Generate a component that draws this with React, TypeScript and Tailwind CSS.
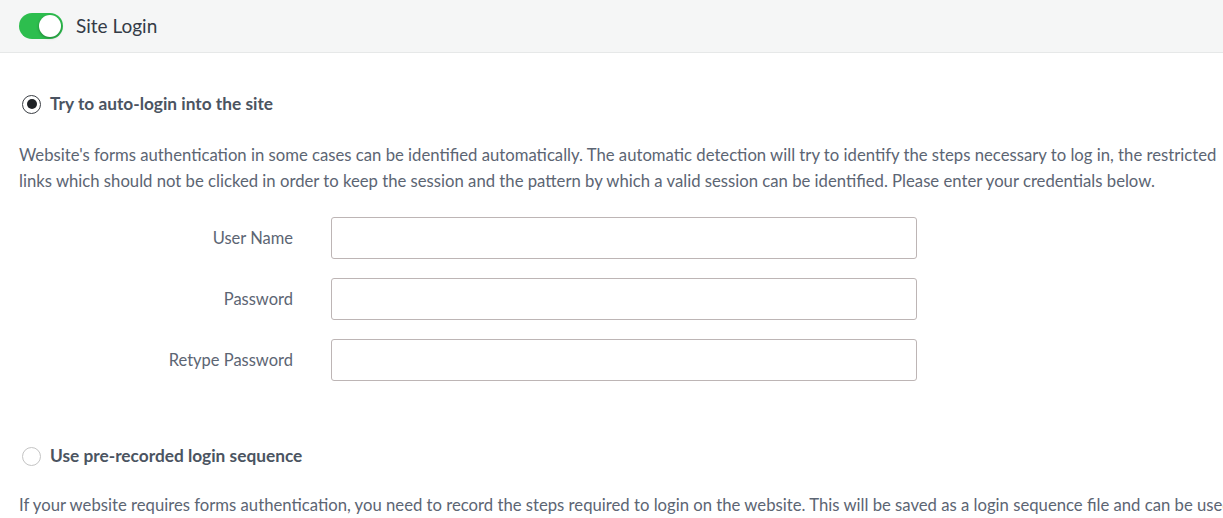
import React from 'react';

function Toggle() {
  return (
    <div className="relative h-[26px] w-[44px] rounded-full bg-[#2dbe4e]">
      <div className="absolute right-[2px] top-[2px] h-[22px] w-[22px] rounded-full bg-white shadow-[0_1px_3px_rgba(0,0,0,0.35)]" />
    </div>
  );
}

function Radio({ checked }: { checked?: boolean }) {
  return checked ? (
    <span className="flex h-[19px] w-[19px] items-center justify-center rounded-full border-[1.5px] border-[#3b3f45] bg-white">
      <span className="h-[10px] w-[10px] rounded-full bg-[#1f2226]" />
    </span>
  ) : (
    <span className="h-[19px] w-[19px] rounded-full border border-[#c4c4c4] bg-white" />
  );
}

const fields = ['User Name', 'Password', 'Retype Password'];

export default function App() {
  return (
    <div className="h-[518px] w-[1223px] overflow-hidden bg-white font-['Lato',sans-serif]">
      <header className="flex h-[53px] items-center gap-[13px] border-b border-[#e6e8e8] bg-[#f5f6f6] pl-[19px]">
        <Toggle />
        <span className="text-[19px] text-[#333b47]">Site Login</span>
      </header>

      <div className="pl-[19px] pt-[39px]">
        <label className="flex h-[24px] items-center gap-[9px] pl-[3px]">
          <Radio checked />
          <span className="text-[17.3px] font-bold text-[#4b5461]">Try to auto-login into the site</span>
        </label>

        <p className="mt-[26px] whitespace-nowrap text-[16.7px] leading-[26px] text-[#5c6573]">
          Website's forms authentication in some cases can be identified automatically. The automatic detection will try to identify the steps necessary to log in, the restricted
          <br />
          links which should not be clicked in order to keep the session and the pattern by which a valid session can be identified. Please enter your credentials below.
        </p>

        <div className="mt-[23px] grid grid-cols-[274px_586px] gap-x-[38px] gap-y-[19px]">
          {fields.map((f) => (
            <React.Fragment key={f}>
              <div className="flex h-[42px] items-center justify-end text-[16.5px] text-[#5c6573]">{f}</div>
              <input
                type={f === 'User Name' ? 'text' : 'password'}
                className="h-[42px] rounded-[3px] border border-[#bdb5b5] bg-white px-3 text-[16px] outline-none"
              />
            </React.Fragment>
          ))}
        </div>

        <label className="mt-[63px] flex h-[24px] items-center gap-[9px] pl-[3px]">
          <Radio />
          <span className="text-[17.3px] font-bold text-[#4b5461]">Use pre-recorded login sequence</span>
        </label>

        <p className="mt-[24px] whitespace-nowrap text-[16.7px] leading-[26px] text-[#5c6573]">
          If your website requires forms authentication, you need to record the steps required to login on the website. This will be saved as a login sequence file and can be used
        </p>
      </div>
    </div>
  );
}
